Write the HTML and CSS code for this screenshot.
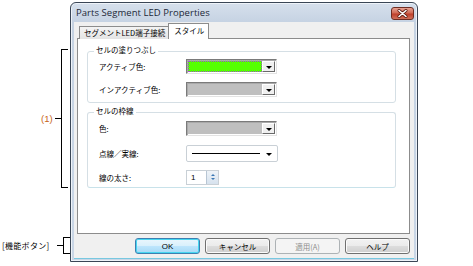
FILE: index.html
```html
<!DOCTYPE html>
<html lang="ja">
<head>
<meta charset="utf-8">
<title>Parts Segment LED Properties</title>
<link rel="stylesheet" href="styles.css">
</head>
<body>
<div class="page">
  <div class="note note-1">
    <span class="note-text num">(1)</span>
    <span class="tick"></span>
    <span class="bracket b1"></span>
  </div>
  <div class="note note-2">
    <span class="note-text">[機能ボタン]</span>
    <span class="tick"></span>
    <span class="bracket b2"></span>
  </div>

  <div class="window">
    <div class="titlebar">
      <span class="title">Parts Segment LED Properties</span>
      <span class="close">
        <svg width="11" height="9" viewBox="0 0 11 9"><path d="M2 1.5 L9 7.5 M9 1.5 L2 7.5" stroke="#5a1a10" stroke-width="3" stroke-linecap="round"/><path d="M2 1.5 L9 7.5 M9 1.5 L2 7.5" stroke="#fff" stroke-width="1.6" stroke-linecap="round"/></svg>
      </span>
    </div>
    <div class="client">
      <div class="tabs">
        <div class="tab">セグメントLED端子接続</div>
        <div class="tab active">スタイル</div>
      </div>
      <div class="panel">
        <div class="group g1">
          <div class="legend">セルの塗りつぶし</div>
          <div class="rows">
            <span class="label">アクティブ色:</span>
            <div class="combo"><span class="fill green"><span class="focus"></span></span><span class="drop"><i></i></span></div>
            <span class="label">インアクティブ色:</span>
            <div class="combo"><span class="fill gray"></span><span class="drop"><i></i></span></div>
          </div>
        </div>
        <div class="group g2">
          <div class="legend">セルの枠線</div>
          <div class="rows">
            <span class="label">色:</span>
            <div class="combo"><span class="fill gray"></span><span class="drop"><i></i></span></div>
            <span class="label">点線／実線:</span>
            <div class="linecombo"><span class="line"></span><i></i></div>
            <span class="label">線の太さ:</span>
            <div class="spin"><span class="val">1</span><span class="spinbtn"><i class="up"></i><i class="down"></i></span></div>
          </div>
        </div>
      </div>
      <div class="buttons">
        <button class="btn default">OK</button>
        <button class="btn">キャンセル</button>
        <button class="btn disabled">適用(A)</button>
        <button class="btn">ヘルプ</button>
      </div>
    </div>
  </div>
</div>
</body>
</html>
```
FILE: styles.css
```css
* { box-sizing: border-box; }
html, body { margin: 0; padding: 0; background: #fff; }
body {
  width: 473px; height: 266px; overflow: hidden;
  font-family: "Noto Sans CJK JP", "Noto Sans", sans-serif;
  font-size: 7.5px; color: #000;
}
.page { position: relative; width: 473px; height: 266px; padding: 2px 0 0 70px; }

/* annotations */
.note { position: absolute; display: flex; align-items: center; }
.note-1 { left: 41px; top: 49px; height: 139px; }
.note-2 { left: 2px; top: 237px; height: 17px; }
.note-text { font-size: 8px; line-height: 10px; white-space: nowrap; }
.note-1 .note-text { color: #c8641a; font-family: "Liberation Sans", sans-serif; font-size: 9.5px; width: 14px; }
.note-2 .note-text { letter-spacing: 0.3px; width: 55px; }
.tick { width: 6px; height: 1px; background: #000; }
.bracket { align-self: stretch; width: 7px; border: 1px solid #000; border-right: none; }

/* window */
.window {
  width: 348px; height: 260px;
  border: 1px solid #3a4656;
  border-radius: 6px 6px 0 0;
  background: linear-gradient(#d6e0ec, #c5d2e2 20px, #c9d6e6);
  padding: 0 3px 2px 3px;
  display: flex; flex-direction: column;
  box-shadow: inset 0 0 0 1px #eef3f9;
}
.titlebar {
  height: 19px; flex: none;
  display: flex; align-items: center; justify-content: space-between;
  padding: 0 0 0 2px;
}
.title { font-family: "Open Sans", sans-serif; font-size: 9.5px; color: #1c2838; letter-spacing: 0.05px; }
.close {
  width: 23px; height: 13px; margin-top: 1px;
  border: 1px solid #6e2d22; border-radius: 3px;
  background: linear-gradient(#e8a293, #d06a55 45%, #bf3f2a 55%, #d0705a);
  display: flex; align-items: center; justify-content: center;
}
.close svg { display: block; }
.client {
  flex: 1; background: #f0f0f0;
  padding: 1px 4px 0 3px;
  display: flex; flex-direction: column;
  border-bottom: 1px solid #78c8e0;
}

/* tabs */
.tabs { display: flex; align-items: flex-end; height: 16px; margin-left: 2px; position: relative; z-index: 1; margin-bottom: -1px; }
.tab {
  height: 13px; line-height: 12px;
  padding: 0 3px 0 4px;
  border: 1px solid #8c8c8c; border-bottom: none;
  background: linear-gradient(#f4f4f4, #e4e4e4);
  white-space: nowrap;
}
.tab.active {
  height: 16px; line-height: 14px;
  background: #fff; margin-left: -1px;
  padding: 0 4px 0 5px;
}

.panel {
  height: 196px; flex: none;
  border: 1px solid #8c8c8c;
  background: #fff;
  padding: 12px 13px 0 9px;
}

/* groups */
.group {
  border: 1px solid #d5dfe5; border-radius: 3px;
  padding: 0 0 0 11px;
}
.g1 { height: 52px; }
.g2 { height: 76px; margin-top: 9px; border-bottom-color: #c8e2ea; }
.legend {
  margin: -8px 0 0 -5px; height: 11px; line-height: 11px;
  background: #fff; width: fit-content; padding: 0 2px;
}
.rows {
  display: grid; grid-template-columns: 87px auto;
  align-items: center; justify-items: start;
}
.g1 .rows { margin-top: 4px; row-gap: 8px; }
.g2 .rows { margin-top: 5px; grid-template-rows: 15px 17px 15px; row-gap: 9px; }
.g2 .rows > :nth-child(n+5) { margin-top: -3px; }
.label { white-space: nowrap; }

.combo {
  width: 91px; height: 15px; display: flex;
  border: 1px solid; border-color: #7a7a7a #e3e3e3 #e3e3e3 #7a7a7a;
  box-shadow: inset 1px 1px 0 #a9a9a9;
  padding: 1px 1px 1px 1px;
  background: #fff;
}
.fill { flex: 1; position: relative; }
.fill.green { background: #55ff00; }
.fill.gray { background: #bfbfbf; }
.focus { position: absolute; inset: 0; border: 1px dotted #a050d0; }
.drop {
  width: 13px; flex: none;
  background: #f0f0f0;
  border: 1px solid; border-color: #fff #6a6a6a #6a6a6a #fff;
  display: flex; align-items: center; justify-content: center;
}
.drop i, .linecombo i {
  width: 0; height: 0;
  border-left: 3px solid transparent; border-right: 3px solid transparent;
  border-top: 3px solid #000;
  margin-top: 1px;
}
.linecombo {
  width: 92px; height: 17px;
  border: 1px solid #c9d0d6; border-radius: 2px;
  background: #fff;
  display: flex; align-items: center;
  padding: 0 5px 0 5px;
}
.linecombo .line { width: 68px; height: 1px; background: #000; }
.linecombo i { margin-left: auto; }

.spin {
  width: 33px; height: 15px; display: flex;
  border: 1px solid #c9d0d6; background: #fff;
}
.spin .val { flex: 1; padding-left: 4px; font-family: "Liberation Sans", sans-serif; font-size: 8px; line-height: 13px; }
.spinbtn {
  width: 12px; display: flex; flex-direction: column; align-items: center; justify-content: center; gap: 2px;
  background: linear-gradient(#eef3f8, #d6e2ee);
  border-left: 1px solid #b8c6d4;
}
.spinbtn i { width: 0; height: 0; border-left: 2.5px solid transparent; border-right: 2.5px solid transparent; }
.spinbtn .up { border-bottom: 2.5px solid #3c78b4; }
.spinbtn .down { border-top: 2.5px solid #3c78b4; }

/* buttons */
.buttons { display: flex; justify-content: flex-end; gap: 5px; margin-top: 4px; }
.btn {
  width: 65px; height: 16px; margin: 0; padding: 0;
  border: 1px solid #707070; border-radius: 3px;
  background: linear-gradient(#f2f2f2 0, #ebebeb 50%, #dddddd 50%, #cfcfcf 100%);
  box-shadow: inset 0 0 0 1px #fbfbfb;
  font-family: "Noto Sans CJK JP", sans-serif; font-size: 7.5px; color: #000;
  line-height: 13px;
}
.btn.default {
  border-color: #3c7fb1;
  background: linear-gradient(#eaf6fd 0, #d9f0fc 50%, #bee6fd 50%, #a7d9f5 100%);
  box-shadow: inset 0 0 0 1px #48d6f0;
  font-family: "Liberation Sans", sans-serif; font-size: 8px;
}
.btn.disabled {
  border-color: #adb2b5;
  background: #f4f4f4;
  box-shadow: none;
  color: #8d8d8d;
}
```
